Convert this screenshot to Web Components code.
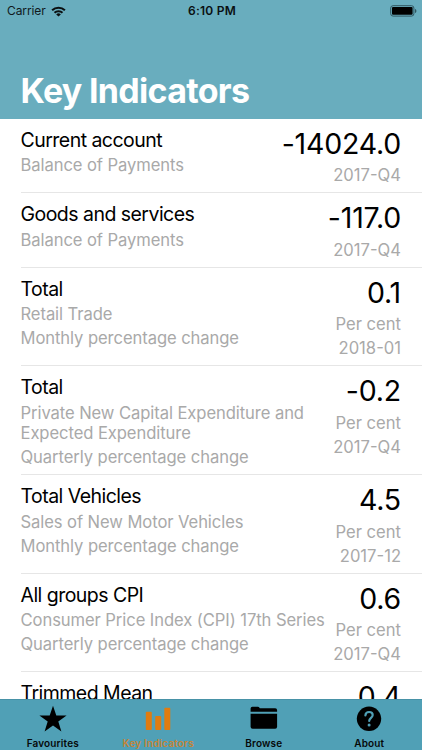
<!DOCTYPE html>
<html lang="en">
<head>
  <meta charset="utf-8" />
  <title>Key Indicators</title>
  <style>
    body {
      margin: 0;
      font-family: Inter, "Liberation Sans", sans-serif;
      background: #fff;
    }
  </style>
</head>
<body>
  <indicators-app></indicators-app>

  <script>
    class StatusBar extends HTMLElement {
      constructor() {
        super();
        this.attachShadow({ mode: 'open' });

        this.shadowRoot.innerHTML = `
          <style>
            :host {
              display: grid;
              grid-template-columns: 1fr auto 1fr;
              align-items: center;
              height: 22px;
              padding: 0 5px 0 7px;
              font-size: 12px;
              line-height: 22px;
              color: #10191c;
            }

            .carrier {
              display: flex;
              align-items: center;
              gap: 5px;
              letter-spacing: -0.1px;
            }

            .time {
              font-weight: 600;
              letter-spacing: 0.25px;
              color: #0a1012;
            }

            .battery {
              justify-self: end;
            }

            svg {
              display: block;
            }
          </style>
          <div class="carrier">
            <span>Carrier</span>
            <svg width="15" height="11" viewBox="0 0 15 11" fill="none" stroke="#0a0f10" stroke-width="2">
              <path d="M1.1 4.3a9.1 9.1 0 0 1 12.8 0" />
              <path d="M3.5 6.8a5.7 5.7 0 0 1 8 0" />
              <path d="M7.5 10.6L5.2 8.4a3.3 3.3 0 0 1 4.6 0z" fill="#0a0f10" stroke="none" />
            </svg>
          </div>
          <div class="time">6:10 PM</div>
          <svg class="battery" width="27" height="12" viewBox="0 0 27 12">
            <rect x="0.7" y="0.7" width="23.2" height="10.4" rx="2.4" fill="none" stroke="#2f5661" stroke-width="1" />
            <rect x="2" y="2" width="20.6" height="7.8" rx="1" fill="#000" />
            <path d="M25 4v4c.9-.3 1.4-1.1 1.4-2s-.5-1.7-1.4-2z" fill="#2f5661" />
          </svg>
        `;
      }
    }

    class NavHeader extends HTMLElement {
      constructor() {
        super();
        this.attachShadow({ mode: 'open' });

        this.shadowRoot.innerHTML = `
          <style>
            :host {
              display: flex;
              flex-direction: column;
              justify-content: space-between;
              box-sizing: border-box;
              height: 118.5px;
              flex: none;
              background: #69adbe;
            }

            h1 {
              margin: 0;
              padding: 0 20.5px 7px;
              font-size: 34px;
              font-weight: 700;
              line-height: 42px;
              letter-spacing: -0.7px;
              color: #fff;
            }
          </style>
          <status-bar></status-bar>
          <h1><slot></slot></h1>
        `;
      }
    }

    class IndicatorRow extends HTMLElement {
      constructor() {
        super();
        this.attachShadow({ mode: 'open' });

        this.shadowRoot.innerHTML = `
          <style>
            :host {
              display: flex;
              justify-content: space-between;
              box-sizing: border-box;
              margin-left: 20.5px;
              padding: 9px 21px 6.5px 0;
              border-bottom: 1px solid #e6e6e6;
              color: #a9a9a9;
              font-size: 16.6px;
              line-height: 20.5px;
              letter-spacing: -0.08px;
            }

            .info,
            .figure {
              display: flex;
              flex-direction: column;
              gap: 3.5px;
            }

            .figure {
              align-items: flex-end;
              flex: none;
              letter-spacing: 0;
            }

            .name {
              margin-bottom: -1px;
              font-size: 19.5px;
              line-height: 25px;
              letter-spacing: -0.53px;
              color: #000;
            }

            .value {
              font-size: 28.5px;
              line-height: 32px;
              padding-bottom: 2px;
              letter-spacing: -0.2px;
              color: #000;
            }

            ::slotted(*) {
              display: block;
            }
          </style>
          <div class="info">
            <div class="name"><slot name="name"></slot></div>
            <slot name="detail"></slot>
          </div>
          <div class="figure">
            <div class="value"><slot name="value"></slot></div>
            <slot name="period"></slot>
          </div>
        `;
      }
    }

    class TabItem extends HTMLElement {
      constructor() {
        super();
        this.attachShadow({ mode: 'open' });

        this.shadowRoot.innerHTML = `
          <style>
            :host {
              display: flex;
              flex-direction: column;
              align-items: center;
              flex: 1;
              padding-top: 5px;
              font-size: 10px;
              font-weight: 600;
              line-height: 14px;
              letter-spacing: 0.15px;
              color: #06090a;
            }

            :host([active]) {
              color: #c58537;
            }

            .icon {
              height: 31px;
            }
          </style>
          <div class="icon"><slot name="icon"></slot></div>
          <span><slot></slot></span>
        `;
      }
    }

    class TabBar extends HTMLElement {
      constructor() {
        super();
        this.attachShadow({ mode: 'open' });

        this.shadowRoot.innerHTML = `
          <style>
            :host {
              display: flex;
              box-sizing: border-box;
              height: 51px;
              flex: none;
              background: #50a0b6;
              border-top: 1px solid #4792a7;
            }

            svg {
              display: block;
            }
          </style>
          <tab-item>
            <svg slot="icon" width="28" height="28" viewBox="0 0 28 28">
              <path d="M14 .8l3.3 9.7h10.3l-8.3 6.1 3.1 9.9-8.4-6-8.4 6 3.1-9.9L.4 10.5h10.3z" />
            </svg>
            Favourites
          </tab-item>
          <tab-item active>
            <svg slot="icon" width="28" height="28" viewBox="0 0 28 28" fill="#e07c10">
              <rect x="1.8" y="6.8" width="6" height="18.2" rx="1" />
              <rect x="11.2" y="11" width="6" height="14" rx="1" />
              <rect x="20.3" y="2.8" width="6" height="22.2" rx="1" />
            </svg>
            Key Indicators
          </tab-item>
          <tab-item>
            <svg slot="icon" width="28" height="28" viewBox="0 0 28 28">
              <path d="M.6 6.7V3.6q0-1.8 1.8-1.8h5.5q1.1 0 1.6.9l.3.6h15.4q1.9 0 1.9 1.9v1.5z" />
              <path d="M.6 8.7h26.5v13.1q0 2-2 2H2.6q-2 0-2-2z" />
            </svg>
            Browse
          </tab-item>
          <tab-item>
            <svg slot="icon" width="28" height="28" viewBox="0 0 28 28">
              <circle cx="14" cy="13.8" r="12.2" />
              <path d="M10.4 10.5c.1-2.3 1.6-3.5 3.7-3.5s3.6 1.2 3.6 3.1c0 2.7-3.5 3-3.5 5.9" fill="none" stroke="#50a0b6" stroke-width="2.2" stroke-linecap="round" />
              <circle cx="14.1" cy="20" r="1.5" fill="#50a0b6" />
            </svg>
            About
          </tab-item>
        `;
      }
    }

    class IndicatorsApp extends HTMLElement {
      constructor() {
        super();
        this.attachShadow({ mode: 'open' });

        this.shadowRoot.innerHTML = `
          <style>
            :host {
              display: flex;
              flex-direction: column;
              height: 750px;
              overflow: hidden;
            }

            /* the last row runs on below the tab bar */
            main {
              flex: 1;
              min-height: 0;
              overflow: hidden;
            }
          </style>
          <nav-header>Key Indicators</nav-header>
          <main>
            <indicator-row>
              <span slot="name">Current account</span>
              <span slot="detail">Balance of Payments</span>
              <span slot="value">-14024.0</span>
              <span slot="period">2017-Q4</span>
            </indicator-row>
            <indicator-row>
              <span slot="name">Goods and services</span>
              <span slot="detail">Balance of Payments</span>
              <span slot="value">-117.0</span>
              <span slot="period">2017-Q4</span>
            </indicator-row>
            <indicator-row>
              <span slot="name">Total</span>
              <span slot="detail">Retail Trade</span>
              <span slot="detail">Monthly percentage change</span>
              <span slot="value">0.1</span>
              <span slot="period">Per cent</span>
              <span slot="period">2018-01</span>
            </indicator-row>
            <indicator-row>
              <span slot="name">Total</span>
              <span slot="detail">Private New Capital Expenditure and<br />Expected Expenditure</span>
              <span slot="detail">Quarterly percentage change</span>
              <span slot="value">-0.2</span>
              <span slot="period">Per cent</span>
              <span slot="period">2017-Q4</span>
            </indicator-row>
            <indicator-row>
              <span slot="name">Total Vehicles</span>
              <span slot="detail">Sales of New Motor Vehicles</span>
              <span slot="detail">Monthly percentage change</span>
              <span slot="value">4.5</span>
              <span slot="period">Per cent</span>
              <span slot="period">2017-12</span>
            </indicator-row>
            <indicator-row>
              <span slot="name">All groups CPI</span>
              <span slot="detail">Consumer Price Index (CPI) 17th Series</span>
              <span slot="detail">Quarterly percentage change</span>
              <span slot="value">0.6</span>
              <span slot="period">Per cent</span>
              <span slot="period">2017-Q4</span>
            </indicator-row>
            <indicator-row>
              <span slot="name">Trimmed Mean</span>
              <span slot="value">0.4</span>
            </indicator-row>
          </main>
          <tab-bar></tab-bar>
        `;
      }
    }

    customElements.define('status-bar', StatusBar);
    customElements.define('nav-header', NavHeader);
    customElements.define('indicator-row', IndicatorRow);
    customElements.define('tab-item', TabItem);
    customElements.define('tab-bar', TabBar);
    customElements.define('indicators-app', IndicatorsApp);
  </script>
</body>
</html>
